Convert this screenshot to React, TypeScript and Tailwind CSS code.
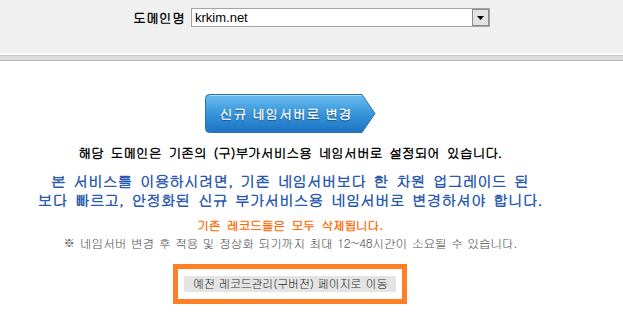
const font = "font-['Gulim','Noto_Sans_CJK_KR',sans-serif]"

const NewNsButton = () => (
    <div className="relative mx-auto w-[171px] h-[40px]">
        <svg width="171" height="40" viewBox="0 0 171 40" className="absolute inset-0">
            <defs>
                <linearGradient id="nsBlue" x1="0" y1="0" x2="0" y2="1">
                    <stop offset="0" stopColor="#6cbcef" />
                    <stop offset="0.5" stopColor="#3896da" />
                    <stop offset="1" stopColor="#1c73c2" />
                </linearGradient>
            </defs>
            <path d="M4.5 0.5 H157 L170 19.5 L157 38.5 H4.5 Q0.5 38.5 0.5 34.5 V4.5 Q0.5 0.5 4.5 0.5 Z" fill="url(#nsBlue)" stroke="#2a72b8" />
            <path d="M5 1.5 H156" stroke="#a8dcfa" strokeWidth="1" />
        </svg>
        <span className={`absolute inset-0 flex items-center justify-center pr-[8px] text-white font-bold text-[13px] tracking-[0.6px] [text-shadow:0_1px_1px_#11508f] ${font}`}>
            신규 네임서버로 변경
        </span>
    </div>
)

export default function App() {
    return (
        <div className={`w-[623px] h-[324px] bg-white overflow-hidden ${font}`}>
            <div className="bg-[#f0f0f0] h-[53px] pt-[8px]">
                <div className="flex items-center">
                    <span className="w-[186px] text-right pr-[1px] font-bold text-[13px] text-black leading-[19px]">도메인명</span>
                    <div className="ml-[5px] w-[299px] h-[19px] bg-white border border-[#a5a5a5] flex items-center">
                        <span className="flex-1 pl-[3px] text-[13px] font-['Liberation_Sans',sans-serif] text-black leading-[17px]">krkim.net</span>
                        <div className="w-[17px] h-[17px] bg-[#e2e2e2] border border-[#8a8a8a] flex items-center justify-center">
                            <svg width="7" height="4" viewBox="0 0 7 4"><path d="M0 0H7L3.5 4Z" fill="#000" /></svg>
                        </div>
                    </div>
                </div>
            </div>
            <div className="h-[2px] bg-[#fafafa]" />
            <div className="h-[1px] bg-[#c8c8c8]" />
            <div className="h-[4px] bg-[#dcdcdc]" />
            <div className="h-[1px] bg-[#b5b5b5]" />

            <div className="w-[580px] text-center pt-[33px]">
                <NewNsButton />
                <p className="mt-[11px] text-[13px] leading-[16px] font-bold text-black tracking-[-0.3px] [word-spacing:3px]">
                    해당 도메인은 기존의 (구)부가서비스용 네임서버로 설정되어 있습니다.
                </p>
                <div className="mt-[10px] text-[15px] leading-[19px] font-bold text-[#2a5aad] tracking-[-0.3px] [word-spacing:3px]">
                    <p>본 서비스를 이용하시려면, 기존 네임서버보다 한 차원 업그레이드 된</p>
                    <p>보다 빠르고, 안정화된 신규 부가서비스용 네임서버로 변경하셔야 합니다.</p>
                </div>
                <p className="mt-[8px] text-[12px] leading-[16px] font-bold text-[#ff6a00] tracking-[-0.4px] [word-spacing:3px]">
                    기존 레코드들은 모두 삭제됩니다.
                </p>
                <p className="mt-[2px] text-[12px] leading-[16px] text-[#555555] tracking-[-0.4px] [word-spacing:1px]">
                    <span className="text-[13px]">※</span> 네임서버 변경 후 적용 및 정상화 되기까지 최대 12~48시간이 소요될 수 있습니다.
                </p>
                <div className="mt-[13px] mx-auto w-[234px] border-[5px] border-[#ff7f27] px-[6px] pt-[7px] pb-[7px]">
                    <div className="h-[16px] bg-[#e4e4e4] rounded-[2px] flex items-center justify-center whitespace-nowrap text-[11.5px] text-[#333333] tracking-[-0.6px] [word-spacing:1px]">
                        예전 레코드관리(구버전) 페이지로 이동
                    </div>
                </div>
            </div>
        </div>
    )
}
